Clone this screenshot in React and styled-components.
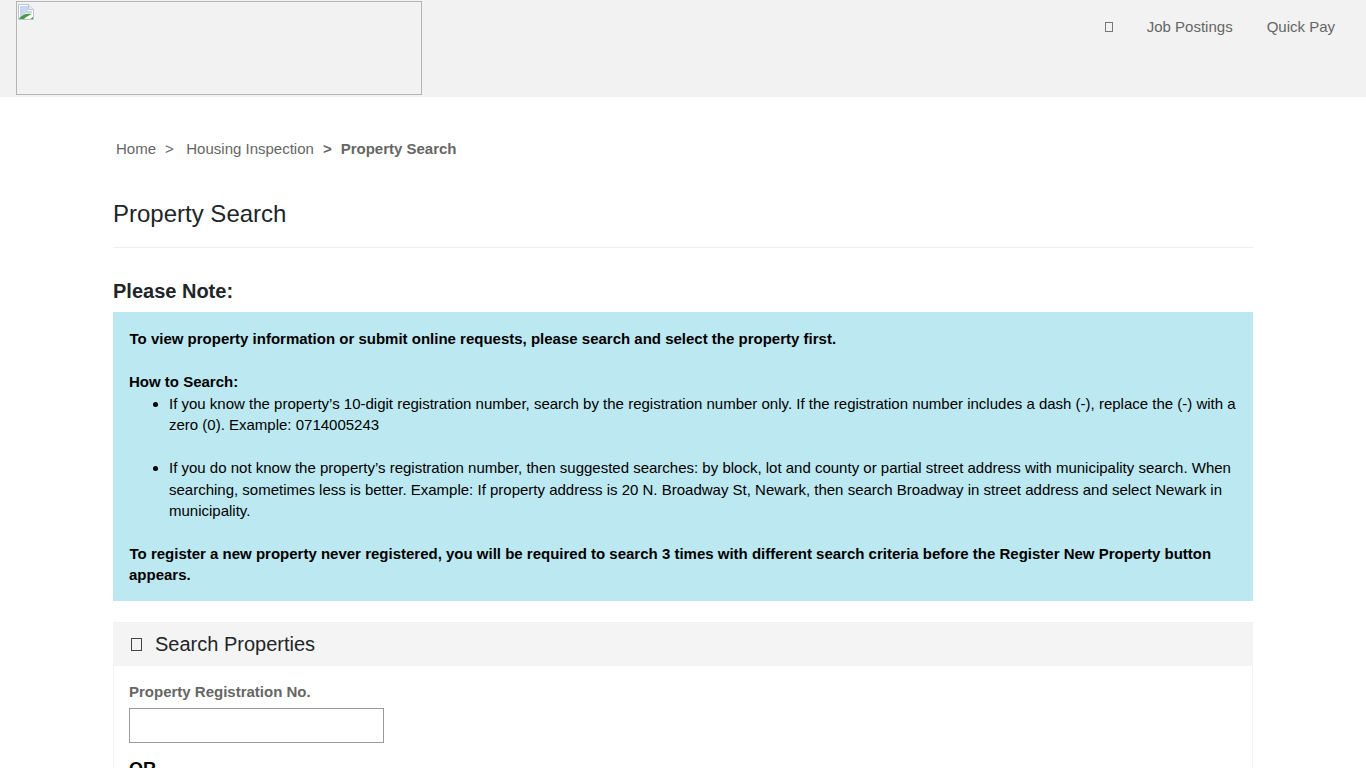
import React from "react";
import styled, { createGlobalStyle } from "styled-components";

const GlobalStyle = createGlobalStyle`
  html, body {
    margin: 0;
    height: 768px;
    overflow: hidden;
    background: #fff;
  }
  body {
    font-family: "Liberation Sans", Arial, sans-serif;
    font-size: 15px;
    line-height: 21.6px;
    color: #212529;
  }
`;

const Header = styled.header`
  display: flex;
  justify-content: space-between;
  height: 97px;
  padding: 1px 16px 0;
  box-sizing: border-box;
  background: #f2f2f2;
`;

const LogoFrame = styled.div`
  width: 406px;
  height: 94px;
  padding: 2px 1px;
  box-sizing: border-box;
  border: 1px solid #b5b5b5;
`;

const Nav = styled.nav`
  display: flex;
  align-items: center;
  height: 52px;
  padding-right: 15px;
`;

const NavLink = styled.a`
  margin-left: 34px;
  color: #666;
`;

const Tofu = styled.span`
  display: inline-block;
  box-sizing: border-box;
  width: ${(p) => p.$w}px;
  height: ${(p) => p.$h}px;
  border: 1px solid ${(p) => p.$color};
`;

const Main = styled.main`
  width: 1140px;
  margin: 0 auto;
`;

const Breadcrumb = styled.div`
  display: flex;
  align-items: center;
  height: 22px;
  margin: 41px 0 0 3px;
  color: #666;
`;

const Crumb = styled.span`
  margin-right: ${(p) => p.$gap}px;
  font-weight: ${(p) => (p.$bold ? 700 : 400)};
`;

const Title = styled.h1`
  margin: 39px 0 0;
  padding-bottom: 19px;
  border-bottom: 1px solid #eee;
  font-size: 24px;
  font-weight: 400;
  line-height: 29px;
`;

const NoteHeading = styled.h2`
  margin: 30px 0 8px;
  font-size: 20px;
  font-weight: 700;
  line-height: 26px;
`;

const Alert = styled.div`
  box-sizing: border-box;
  height: 289px;
  padding: 16px;
  background: #bce8f1;
  color: #000;
`;

const AlertLine = styled.p`
  margin: 0 0 21.6px;
  font-weight: 700;
  text-indent: 0.5px;
`;

const ClosingLine = styled(AlertLine)`
  margin: 0;
  line-height: 21px;
`;

const SubHead = styled.div`
  font-weight: 700;
`;

const Bullets = styled.ul`
  margin: 0 0 21.6px;
  padding-left: 40px;

  li + li {
    margin-top: 21px;
  }
`;

const Card = styled.section`
  margin-top: 21px;
  border: 1px solid #f2f2f2;
  border-bottom: 0;
`;

const CardHeader = styled.div`
  display: flex;
  align-items: center;
  gap: 13px;
  height: 43px;
  padding-left: 17px;
  background: #f4f4f4;
  font-size: 20px;
`;

const CardBody = styled.div`
  padding: 15px 15px 0;
`;

const Label = styled.label`
  display: block;
  margin-bottom: 5px;
  color: #666;
  font-weight: 700;
`;

const TextInput = styled.input`
  display: block;
  box-sizing: border-box;
  width: 255px;
  height: 35px;
  border: 1px solid #999;
  background: #fff;
`;

const OrLabel = styled.div`
  margin-top: 16px;
  color: #000;
  font-size: 18px;
  font-weight: 700;
`;

const BrokenImage = () => (
  <svg width="16" height="16" viewBox="0 0 16 16" style={{ display: "block" }}>
    <path d="M.5.5h10l5 5v10H.5z" fill="#fff" stroke="#b9c4d6" />
    <path d="M10.5.5v5h5" fill="#e6ebf3" stroke="#b9c4d6" />
    <path d="M2 2h8v5h4v2L8 9 2 13z" fill="#c7d7f2" />
    <path d="M1 15C3 11 8 9 14 10 11 11 8 13 6 15z" fill="#4c9a3b" />
    <path d="M12 15l3-2v2z" fill="#4c9a3b" />
  </svg>
);

export default function App() {
  return (
    <>
      <GlobalStyle />
      <Header>
        <LogoFrame>
          <BrokenImage />
        </LogoFrame>
        <Nav>
          <Tofu $w={8} $h={10} $color="#777" />
          <NavLink>Job Postings</NavLink>
          <NavLink>Quick Pay</NavLink>
        </Nav>
      </Header>
      <Main>
        <Breadcrumb>
          <Crumb $gap={9}>Home</Crumb>
          <Crumb $gap={12.5}>&gt;</Crumb>
          <Crumb $gap={9}>Housing Inspection</Crumb>
          <Crumb $gap={9} $bold>&gt;</Crumb>
          <Crumb $bold>Property Search</Crumb>
        </Breadcrumb>
        <Title>Property Search</Title>
        <NoteHeading>Please Note:</NoteHeading>
        <Alert>
          <AlertLine>To view property information or submit online requests, please search and select the property first.</AlertLine>
          <SubHead>How to Search:</SubHead>
          <Bullets>
            <li>If you know the property’s 10-digit registration number, search by the registration number only. If the registration number includes a dash (-), replace the (-) with a zero (0). Example: 0714005243</li>
            <li>If you do not know the property’s registration number, then suggested searches: by block, lot and county or partial street address with municipality search. When searching, sometimes less is better. Example: If property address is 20 N. Broadway St, Newark, then search Broadway in street address and select Newark in municipality.</li>
          </Bullets>
          <ClosingLine>To register a new property never registered, you will be required to search 3 times with different search criteria before the Register New Property button appears.</ClosingLine>
        </Alert>
        <Card>
          <CardHeader>
            <Tofu $w={11} $h={13} $color="#444" />
            Search Properties
          </CardHeader>
          <CardBody>
            <Label>Property Registration No.</Label>
            <TextInput />
            <OrLabel>OR</OrLabel>
          </CardBody>
        </Card>
      </Main>
    </>
  );
}
